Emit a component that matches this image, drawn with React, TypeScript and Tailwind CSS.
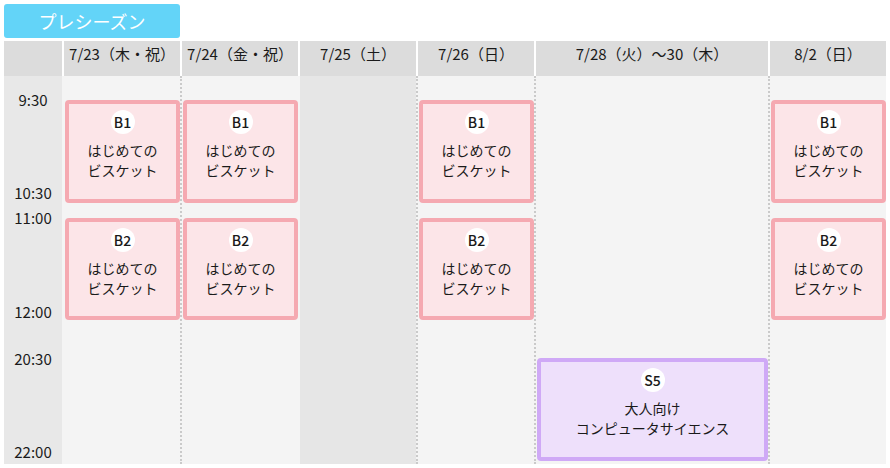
import React from 'react';

type Kind = 'pink' | 'purple';

interface Lesson {
  code: string;
  lines: string[];
  kind: Kind;
}

interface Day {
  label: string;
  wide?: boolean;
  closed?: boolean;
  dotted?: boolean;
  slots: (Lesson | null)[];
}

const biscuit = (code: string): Lesson => ({ code, lines: ['はじめての', 'ビスケット'], kind: 'pink' });
const adult: Lesson = { code: 'S5', lines: ['大人向け', 'コンピュータサイエンス'], kind: 'purple' };

const DAYS: Day[] = [
  { label: '7/23（木・祝）', slots: [biscuit('B1'), biscuit('B2'), null] },
  { label: '7/24（金・祝）', dotted: true, slots: [biscuit('B1'), biscuit('B2'), null] },
  { label: '7/25（土）', closed: true, slots: [null, null, null] },
  { label: '7/26（日）', dotted: true, slots: [biscuit('B1'), biscuit('B2'), null] },
  { label: '7/28（火）〜30（木）', wide: true, dotted: true, slots: [null, null, adult] },
  { label: '8/2（日）', dotted: true, slots: [biscuit('B1'), biscuit('B2'), null] },
];

// slot heights follow the time axis: 9:30-10:30, 11:00-12:00, 20:30-22:00
const SLOT_CLASSES = ['h-[103px]', 'mt-[15px] h-[102px]', 'mt-[38px] h-[103px]'];

const TIMES = [
  { t: '9:30', cls: 'mt-[14px]' },
  { t: '10:30', cls: 'mt-[73px]' },
  { t: '11:00', cls: 'mt-[5px]' },
  { t: '12:00', cls: 'mt-[74px]' },
  { t: '20:30', cls: 'mt-[27px]' },
  { t: '22:00', cls: 'mt-[73px]' },
];

const LessonCard: React.FC<{ lesson: Lesson }> = ({ lesson }) => {
  const tone =
    lesson.kind === 'pink'
      ? 'border-[#f5a9b1] bg-[#fce5e8]'
      : 'border-[#cfa9f6] bg-[#eee0fb]';
  return (
    <div className={`ml-[1px] h-full flex flex-col items-center border-4 rounded-[4px] ${tone}`}>
      <div className="mt-[6px] w-[24px] h-[24px] rounded-full bg-white flex items-center justify-center text-[14px] font-medium text-[#1a1a1a]">
        {lesson.code}
      </div>
      <div className="mt-[6px] text-center text-[14px] leading-[20px] text-[#1a1a1a]">
        {lesson.lines.map(line => (
          <div key={line}>{line}</div>
        ))}
      </div>
    </div>
  );
};

export default function App() {
  return (
    <div
      className="w-[890px] h-[468px] bg-white px-[4px] pt-[4px] overflow-hidden"
      style={{ fontFamily: '"Noto Sans CJK JP", "Noto Sans", sans-serif' }}
    >
      <div className="w-[176px] h-[34px] rounded-[3px] bg-[#63d4f8] text-white text-[18px] flex items-center justify-center">
        プレシーズン
      </div>

      <div className="mt-[3px] grid grid-cols-[58px_116px_116px_116px_116px_232px_116px] grid-rows-[35px_388px] gap-x-[2px]">
        <div className="bg-[#dcdcdc]" />
        {DAYS.map(day => (
          <div key={day.label} className="bg-[#dcdcdc] pt-[3px] text-center text-[15px] leading-[20px] text-[#1a1a1a] whitespace-nowrap">
            {day.label}
          </div>
        ))}

        <div className="bg-[#e8e8e8] flex flex-col items-center text-[15px] leading-[20px] text-[#1a1a1a]">
          {TIMES.map(x => (
            <div key={x.t} className={x.cls}>
              {x.t}
            </div>
          ))}
        </div>
        {DAYS.map(day => (
          <div
            key={day.label + '-body'}
            className={`-ml-[2px] border-l-2 pt-[24px] flex flex-col ${
              day.dotted ? 'border-dotted border-[#cacaca] bg-[#f4f4f4]' : day.closed ? 'border-[#f4f4f4] bg-[#e6e6e6]' : 'border-[#f4f4f4] bg-[#f4f4f4]'
            }`}
          >
            {day.slots.map((slot, i) => (
              <div key={i} className={`shrink-0 ${SLOT_CLASSES[i]}`}>
                {slot && <LessonCard lesson={slot} />}
              </div>
            ))}
          </div>
        ))}
      </div>
    </div>
  );
}
